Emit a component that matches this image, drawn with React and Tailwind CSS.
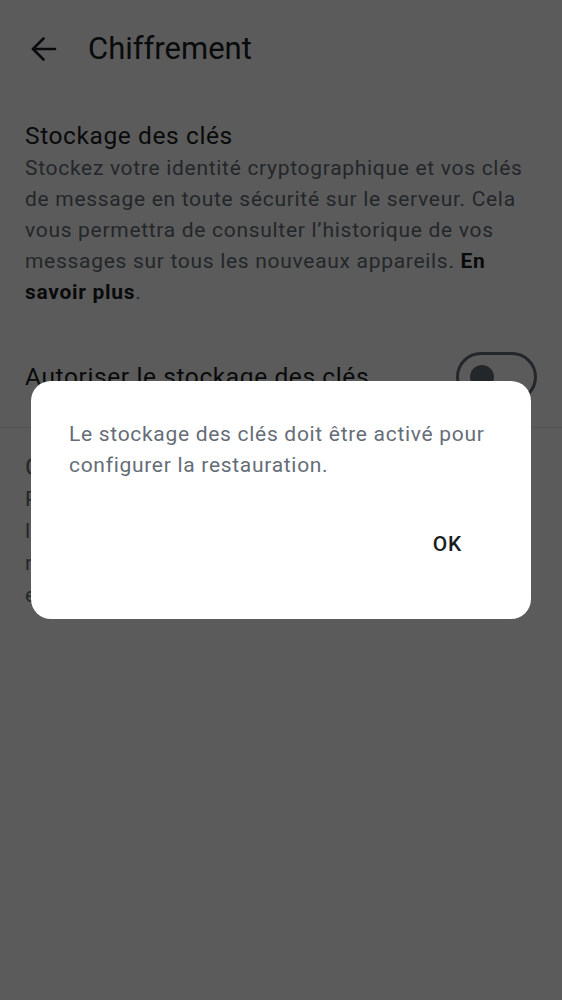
import React from "react";

export default function App() {
  return (
    <div
      className="relative w-full h-[1000px] bg-white overflow-hidden"
      style={{ fontFamily: "Roboto, 'Noto Sans', sans-serif" }}
    >
      {/* Header */}
      <div className="flex items-center h-[98px]">
        <div className="pl-[30px] w-[88px] flex items-center">
          <svg width="28" height="28" viewBox="0 0 28 28" fill="none" stroke="#1b1d22" strokeWidth="2.6" strokeLinecap="round" strokeLinejoin="round">
            <path d="M3 14h22" />
            <path d="M13.5 3.5 3 14l10.5 10.5" />
          </svg>
        </div>
        <div className="text-[31px] leading-[40px] text-[#1b1d22]">Chiffrement</div>
      </div>

      {/* Section 1 */}
      <div className="px-[25px] pt-[21px]">
        <div className="text-[24.5px] leading-[34px] tracking-[0.6px] text-[#1b1d22]">Stockage des clés</div>
        <div className="text-[21px] leading-[31px] tracking-[0.7px] text-[#656d77]">
          Stockez votre identité cryptographique et vos clés de message en toute sécurité sur le serveur. Cela vous permettra de consulter l’historique de vos messages sur tous les nouveaux appareils.{" "}
          <span className="font-bold text-[#1b1d22]">En savoir plus</span>.
        </div>
        <div className="mt-[44px] flex items-center justify-between pb-[25px]">
          <div className="text-[24.5px] leading-[32px] tracking-[0.6px] text-[#1b1d22]">Autoriser le stockage des clés</div>
          <div className="w-[81px] h-[50px] rounded-full border-[3px] border-[#656d77] flex items-center pl-[11px]">
            <div className="w-[24px] h-[24px] rounded-full bg-[#656d77]" />
          </div>
        </div>
      </div>
      <div className="h-px bg-[#e1e6ec]" />

      {/* Section 2 */}
      <div className="px-[25px] pt-[23px] text-[#656d77]">
        <div className="text-[24.5px] leading-[32px] tracking-[0.6px]">Configurer la restauration</div>
        <div className="text-[21px] leading-[32px] tracking-[0.7px]">
          <div>Permet de restaurer votre identité</div>
          <div>l’historique de vos messages avec</div>
          <div>récupération si vous avez perdu</div>
          <div>existants.</div>
        </div>
      </div>

      {/* Overlay */}
      <div className="absolute inset-0 bg-black/[0.645]">
        <div className="mt-[381px] mx-[31px] w-[500px] h-[238px] bg-white rounded-[20px] pl-[38px] pr-[24px] pt-[38px] flex flex-col">
          <div className="text-[21px] leading-[31px] tracking-[0.7px] text-[#656d77]">
            Le stockage des clés doit être activé pour configurer la restauration.
          </div>
          <div className="flex justify-end mt-[40px] mr-[31px]">
            <div className="h-[48px] px-[14px] flex items-center text-[21px] tracking-[0.7px] font-medium text-[#1b1d22]">OK</div>
          </div>
        </div>
      </div>
    </div>
  );
}
